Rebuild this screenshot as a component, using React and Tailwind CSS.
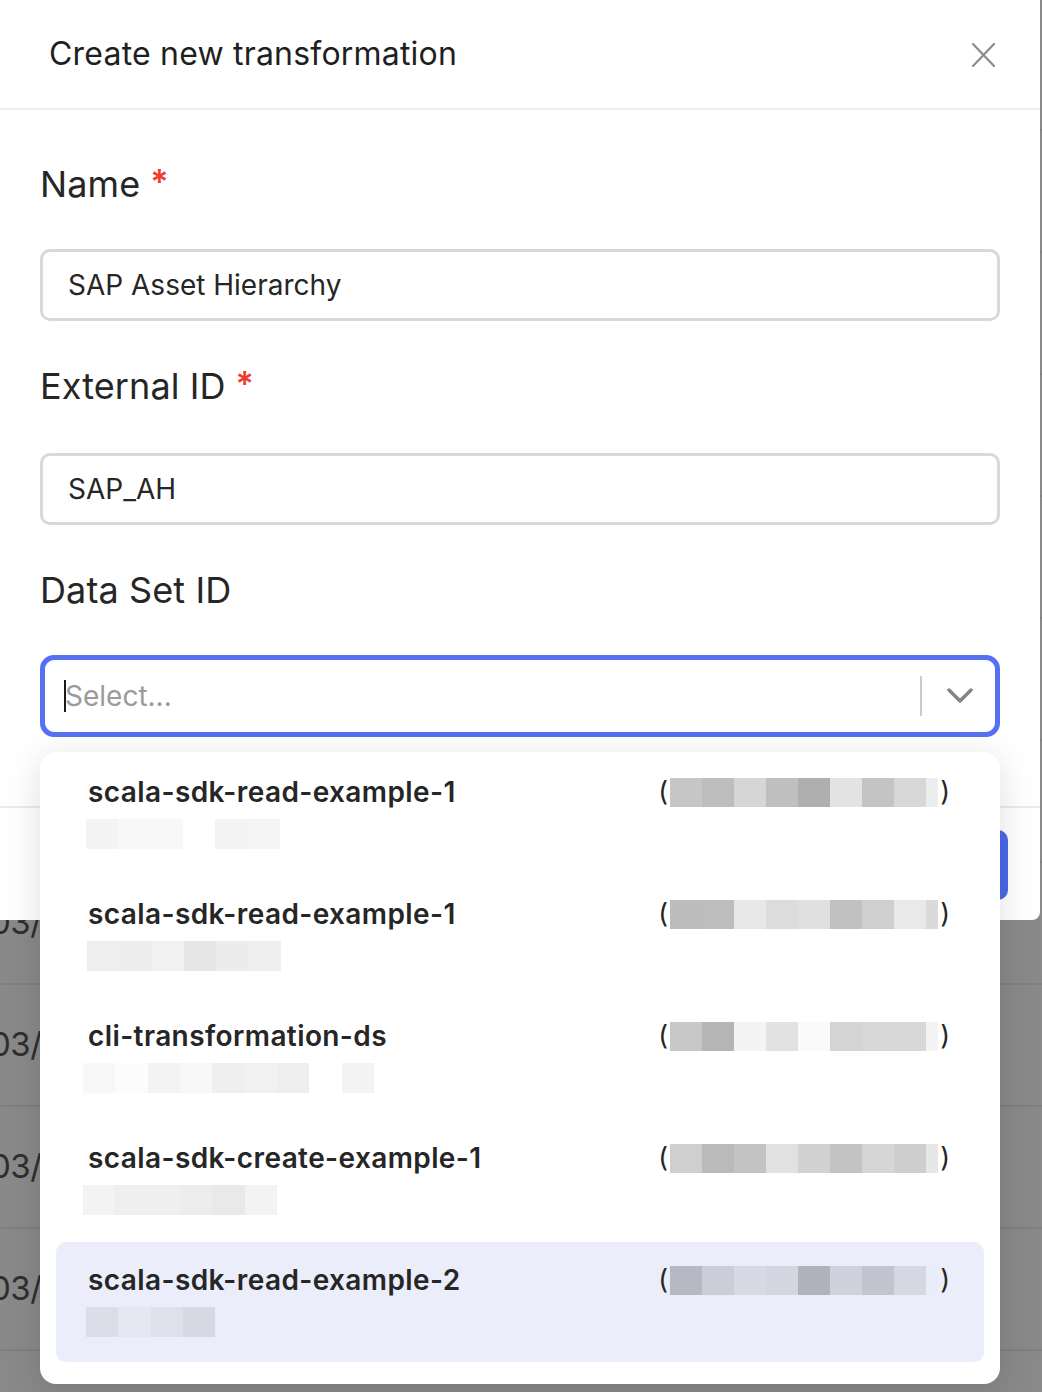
import React from "react";

const items = [
  {
    title: "scala-sdk-read-example-1",
    subOffset: -2,
    sub: [[32, "#f4f4f4"], [65, "#f8f8f8"], [32, null], [32, "#f3f3f3"], [33, "#f5f5f5"]],
    right: ["#c6c6c6", "#bdbdbd", "#d6d6d6", "#bfbfbf", "#afafaf", "#e3e3e3", "#c4c4c4", "#d7d7d7", "#ededed"],
  },
  {
    title: "scala-sdk-read-example-1",
    subOffset: -1,
    sub: [[31, "#eeeeee"], [34, "#ededed"], [32, "#f1f1f1"], [32, "#e6e6e6"], [32, "#ececec"], [33, "#efefef"]],
    right: ["#bcbcbc", "#bdbdbd", "#e8e8e8", "#dcdcdc", "#e0e0e0", "#c1c1c1", "#cfcfcf", "#e9e9e9", "#dadada"],
  },
  {
    title: "cli-transformation-ds",
    subOffset: -5,
    sub: [[32, "#f8f8f8"], [33, "#fcfcfc"], [32, "#f3f3f3"], [32, "#f8f8f8"], [32, "#efefef"], [33, "#f1f1f1"], [32, "#eeeeee"], [33, null], [32, "#f3f3f3"]],
    right: ["#c8c8c8", "#b5b5b5", "#f4f4f4", "#e2e2e2", "#fafafa", "#d4d4d4", "#d8d8d8", "#d8d8d8", "#f4f4f4"],
  },
  {
    title: "scala-sdk-create-example-1",
    subOffset: -5,
    sub: [[32, "#f3f3f3"], [65, "#efefef"], [32, "#ededed"], [33, "#e9e9e9"], [32, "#f3f3f3"]],
    right: ["#cfcfcf", "#bababa", "#c3c3c3", "#e1e1e1", "#d2d2d2", "#c3c3c3", "#d6d6d6", "#cecece", "#e6e6e6"],
  },
  {
    title: "scala-sdk-read-example-2",
    active: true,
    subOffset: -2,
    sub: [[32, "#dcdde8"], [33, "#e6e7f2"], [32, "#dfe0eb"], [32, "#d7d8e4"]],
    right: ["#b7b8c4", "#cbcdd9", "#d7d9e5", "#d3d5e1", "#b1b2bc", "#cfd1dd", "#c3c4d0", "#d5d7e3", "#eaecf8"],
  },
];

function Item({ item }) {
  return (
    <div
      className={
        "h-[120px] rounded-[10px] pl-[32px] pr-[34px] pt-[22px] flex flex-col " +
        (item.active ? "bg-[#ecedfb]" : "bg-white")
      }
    >
      <div className="h-[32px] flex items-center justify-between">
        <span className="text-[28px] leading-[32px] font-semibold text-[#262626] tracking-[0.4px] whitespace-nowrap">
          {item.title}
        </span>
        <span className="flex items-center text-[27px] leading-[32px] text-[#262626]">
          <span>(</span>
          <span className="flex h-[29px] mx-[2px]">
            {item.right.map((c, i) => (
              <span
                key={i}
                className={i === 8 ? "w-[12px] h-full" : "w-[32px] h-full"}
                style={{ backgroundColor: c }}
              />
            ))}
          </span>
          <span>)</span>
        </span>
      </div>
      <div className="flex h-[30px] mt-[11px]" style={{ marginLeft: item.subOffset }}>
        {item.sub.map(([w, c], i) => (
          <span key={i} className="h-full" style={{ width: w, backgroundColor: c || "transparent" }} />
        ))}
      </div>
    </div>
  );
}

function Label({ children, required }) {
  return (
    <div className="h-[40px] flex items-center text-[36px] leading-[40px] text-[#262626] tracking-[0.1px] whitespace-nowrap">
      <span>{children}</span>
      {required && (
        <span className="ml-[10px] text-[#ef3a2e] text-[34px] font-semibold leading-[40px] -translate-y-[2px]">*</span>
      )}
    </div>
  );
}

function TextInput({ value }) {
  return (
    <div className="h-[72px] border-[3px] border-[#d9d9d9] rounded-[10px] px-[25px] flex items-center text-[28px] text-[#262626]">
      {value}
    </div>
  );
}

export default function App() {
  return (
    <div className="relative w-[1042px] h-[1392px] overflow-hidden bg-[#898989] font-[Inter,'Noto_Sans',sans-serif]">
      {/* background page under the overlay */}
      <div className="flex flex-col pt-[9px]">
        {Array.from({ length: 12 }).map((_, i) => (
          <div
            key={i}
            className="h-[122px] shrink-0 border-b-2 border-[#7f7f7f] flex items-center text-[33px] text-[#2e2e2e] whitespace-nowrap"
          >
            <span className="-ml-[10px] tracking-[-0.5px]">03/14/2023</span>
          </div>
        ))}
      </div>

      {/* modal */}
      <div className="absolute top-0 left-0 w-[1040px] h-[920px] bg-white rounded-br-[8px] flex flex-col">
        <div className="h-[110px] shrink-0 border-b-2 border-[#eeeeee] flex items-center justify-between pl-[49px] pr-[45px]">
          <span className="text-[32px] text-[#1f1f1f] tracking-[0.2px] whitespace-nowrap">Create new transformation</span>
          <svg width="23" height="24" viewBox="0 0 23 24" className="mt-[2px]">
            <path d="M1 1 L22 23 M22 1 L1 23" stroke="#8c8c8c" strokeWidth="2.2" strokeLinecap="round" />
          </svg>
        </div>

        <div className="flex-1 px-[40px] pt-[54px] flex flex-col">
          <Label required>Name</Label>
          <div className="mt-[45px]">
            <TextInput value="SAP Asset Hierarchy" />
          </div>
          <div className="mt-[45px]">
            <Label required>External ID</Label>
          </div>
          <div className="mt-[47px]">
            <TextInput value="SAP_AH" />
          </div>
          <div className="mt-[45px]">
            <Label>Data Set ID</Label>
          </div>
          <div className="mt-[45px] relative">
            <div className="h-[82px] border-[5px] border-[#5571f1] rounded-[14px] flex items-center pl-[19px] pr-[22px]">
              <span className="w-[2px] h-[32px] bg-[#1a1a1a]" />
              <span className="text-[28px] text-[#9b9b9b] -ml-[1px] flex-1">Select...</span>
              <span className="w-[2px] h-[40px] bg-[#cccccc] mr-[25px]" />
              <svg width="26" height="16" viewBox="0 0 26 16">
                <path d="M2 2 L13 13 L24 2" fill="none" stroke="#858585" strokeWidth="3.5" strokeLinecap="round" strokeLinejoin="round" />
              </svg>
            </div>

            {/* dropdown menu */}
            <div className="absolute left-0 right-0 top-[97px] z-10 bg-white rounded-[16px] shadow-[0_6px_36px_rgba(0,0,0,0.13)] px-[16px] pt-[2px] pb-[22px] flex flex-col gap-[2px]">
              {items.map((it, i) => (
                <Item key={i} item={it} />
              ))}
            </div>
          </div>
        </div>

        <div className="h-[114px] shrink-0 border-t-2 border-[#ebebeb] flex items-start justify-end pr-[32px] pt-[22px]">
          <div className="w-[160px] h-[70px] rounded-[10px] bg-[#4a67e8]" />
        </div>
      </div>
    </div>
  );
}
